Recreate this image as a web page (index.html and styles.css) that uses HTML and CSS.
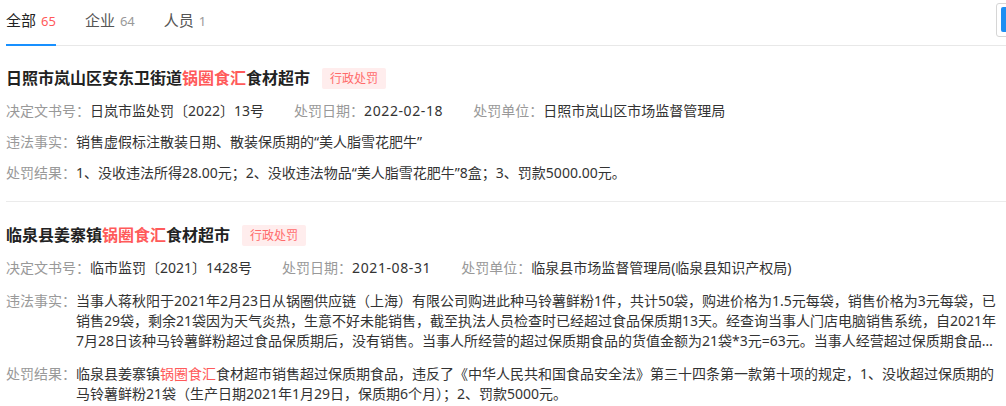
FILE: index.html
```html
<!DOCTYPE html>
<html lang="zh-CN">
<head>
<meta charset="utf-8">
<title>行政处罚</title>
<link rel="stylesheet" href="styles.css">
</head>
<body>
<div class="page">
  <div class="tabs">
    <div class="tab active">全部<span class="count">65</span></div>
    <div class="tab">企业<span class="count">64</span></div>
    <div class="tab">人员<span class="count">1</span></div>
  </div>
  <div class="corner-btn"><span class="corner-fill"></span></div>

  <div class="item">
    <div class="title">
      <span class="name">日照市岚山区安东卫街道<em class="hl">锅圈食汇</em>食材超市</span>
      <span class="tag">行政处罚</span>
    </div>
    <div class="meta">
      <span class="meta-item"><span class="label">决定文书号：</span><span class="value">日岚市监处罚〔2022〕13号</span></span>
      <span class="meta-item"><span class="label">处罚日期：</span><span class="value date">2022-02-18</span></span>
      <span class="meta-item"><span class="label">处罚单位：</span><span class="value">日照市岚山区市场监督管理局</span></span>
    </div>
    <div class="row">
      <span class="label">违法事实：</span>
      <span class="text">销售虚假标注散装日期、散装保质期的“美人脂雪花肥牛”</span>
    </div>
    <div class="row">
      <span class="label">处罚结果：</span>
      <span class="text">1、没收违法所得28.00元；2、没收违法物品“美人脂雪花肥牛”8盒；3、罚款5000.00元。</span>
    </div>
  </div>

  <div class="item item-last">
    <div class="title">
      <span class="name">临泉县姜寨镇<em class="hl">锅圈食汇</em>食材超市</span>
      <span class="tag">行政处罚</span>
    </div>
    <div class="meta">
      <span class="meta-item"><span class="label">决定文书号：</span><span class="value">临市监罚〔2021〕1428号</span></span>
      <span class="meta-item"><span class="label">处罚日期：</span><span class="value date">2021-08-31</span></span>
      <span class="meta-item"><span class="label">处罚单位：</span><span class="value">临泉县市场监督管理局(临泉县知识产权局)</span></span>
    </div>
    <div class="row">
      <span class="label">违法事实：</span>
      <span class="text clamp">当事人蒋秋阳于2021年2月23日从锅圈供应链（上海）有限公司购进此种马铃薯鲜粉1件，共计50袋，购进价格为1.5元每袋，销售价格为3元每袋，已销售29袋，剩余21袋因为天气炎热，生意不好未能销售，截至执法人员检查时已经超过食品保质期13天。经查询当事人门店电脑销售系统，自2021年7月28日该种马铃薯鲜粉超过食品保质期后，没有销售。当事人所经营的超过保质期食品的货值金额为21袋*3元=63元。当事人经营超过保质期食品的行为违反了相关规定。</span>
    </div>
    <div class="row">
      <span class="label">处罚结果：</span>
      <span class="text">临泉县姜寨镇<em class="hl-thin">锅圈食汇</em>食材超市销售超过保质期食品，违反了《中华人民共和国食品安全法》第三十四条第一款第十项的规定，1、没收超过保质期的马铃薯鲜粉21袋（生产日期2021年1月29日，保质期6个月）；2、罚款5000元。</span>
    </div>
  </div>
</div>
</body>
</html>
```

FILE: styles.css
```css
* {
  box-sizing: border-box;
}

html, body {
  margin: 0;
  padding: 0;
  background: #ffffff;
}

body {
  font-family: "Noto Sans", "Noto Sans CJK SC", sans-serif;
  color: #333333;
  font-size: 14px;
  overflow: hidden;
}

.page {
  position: relative;
  padding-left: 6px;
  width: 1006px;
}

.tabs {
  display: flex;
  gap: 29px;
  border-bottom: 1px solid #e8e8e8;
}

.tab {
  position: relative;
  font-size: 15px;
  line-height: 20px;
  padding: 10px 0 14px;
  color: #555555;
}

.tab .count {
  font-size: 13px;
  color: #999999;
  margin-left: 5px;
}

.tab.active {
  color: #222222;
}

.tab.active .count {
  color: #ff5a5a;
}

.tab.active::after {
  content: "";
  position: absolute;
  left: 0;
  right: 0;
  bottom: -1px;
  height: 2px;
  background: #1890ff;
}

.corner-btn {
  position: absolute;
  top: 3px;
  left: 996px;
  width: 40px;
  height: 34px;
  border: 1px solid #d6d6d6;
  border-radius: 3px;
  padding: 3px 4px;
  background: #fff;
}

.corner-fill {
  display: block;
  width: 100%;
  height: 25px;
  background: #1e8ef2;
  border-radius: 2px;
}

.item {
  padding: 20px 8px 18px 0;
  border-bottom: 1px solid #ebebeb;
}

.item-last {
  border-bottom: none;
  padding-top: 21px;
}

.title {
  display: flex;
  align-items: center;
  margin-bottom: 11px;
  line-height: 24px;
}

.name {
  font-size: 16px;
  font-weight: bold;
  color: #222222;
}

.hl {
  font-style: normal;
  color: #ff5a5a;
}

.hl-thin {
  font-style: normal;
  color: #ff5a5a;
}

.tag {
  margin-left: 12px;
  font-size: 12px;
  line-height: 21px;
  padding: 0 8px;
  background: #ffeded;
  color: #ff6b6b;
  border-radius: 2px;
}

.meta {
  display: flex;
  gap: 30px;
  line-height: 20px;
}

.label {
  color: #999999;
}

.value {
  color: #333333;
}

.date {
  letter-spacing: 0.6px;
}

.row {
  display: flex;
  margin-top: 11px;
  line-height: 20px;
}

.item-last .row {
  margin-top: 13px;
}

.row .label {
  flex: none;
}

.text {
  flex: 1;
  min-width: 0;
  color: #333333;
}

.clamp {
  display: -webkit-box;
  -webkit-line-clamp: 3;
  -webkit-box-orient: vertical;
  overflow: hidden;
}
```
